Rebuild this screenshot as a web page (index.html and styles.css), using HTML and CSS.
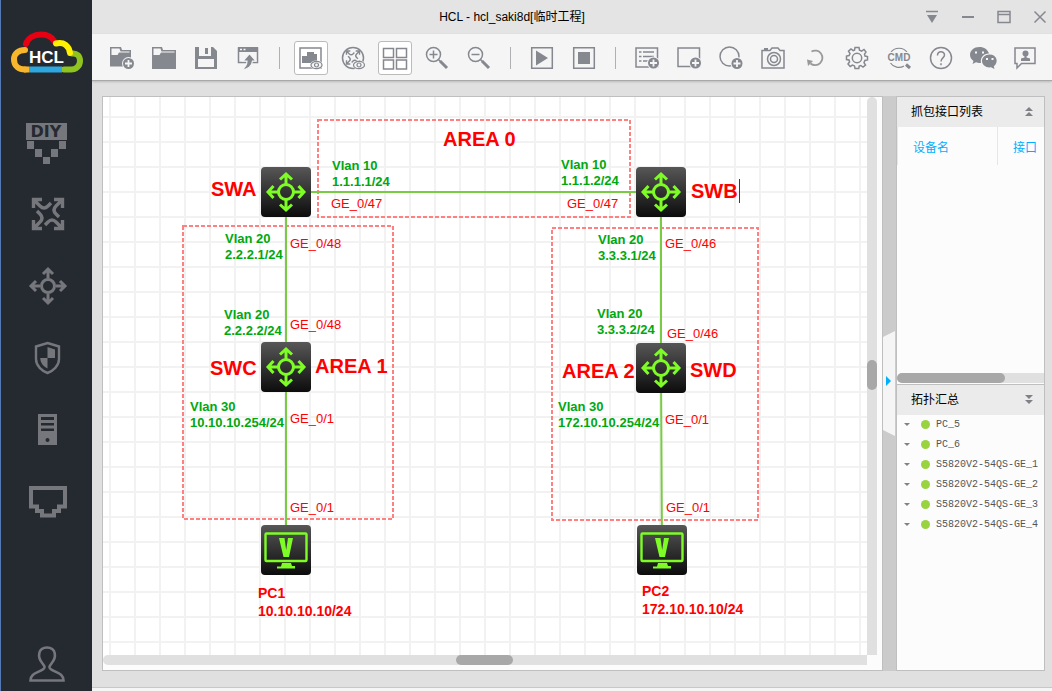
FILE: index.html
```html
<!DOCTYPE html>
<html lang="zh-CN">
<head>
<meta charset="utf-8">
<title>HCL</title>
<link rel="stylesheet" href="styles.css">
</head>
<body>
<svg class="defs" aria-hidden="true">
  <defs>
    <linearGradient id="tile" x1="0" y1="0" x2="0" y2="1">
      <stop offset="0" stop-color="#575757"/><stop offset="1" stop-color="#0c0c0c"/>
    </linearGradient>
    <g id="arrow"><path d="M0 -8V-16M-5 -12L0 -17L5 -12"/></g>
    <g id="bend"><path d="M-14.500 -6V-14.500H-6M-13 -13L-8 -8Q-4 -4 0 -8L3 -11"/></g>
    <g id="bends"><use href="#bend"/><use href="#bend" transform="rotate(90)"/><use href="#bend" transform="rotate(180)"/><use href="#bend" transform="rotate(270)"/></g>
    <g id="arrows"><circle r="6.500"/><use href="#arrow"/><use href="#arrow" transform="rotate(90)"/><use href="#arrow" transform="rotate(180)"/><use href="#arrow" transform="rotate(270)"/></g>
    <g id="plus"><circle r="6.500" class="paper"/><circle r="5.500" class="solid"/><path d="M-3.500 0H3.500M0 -3.500V3.500" stroke="#f5f5f5" stroke-width="1.800"/></g>
    <g id="eye"><ellipse rx="6.500" ry="4.500" class="paper"/><ellipse rx="5.500" ry="3.700" stroke-width="1.200"/><circle r="2" stroke-width="1.200"/></g>
    <symbol id="switch" viewBox="0 0 50 50">
      <rect width="50" height="50" rx="4" fill="url(#tile)"/>
      <g transform="translate(25 25)" fill="none" stroke="#7dfc26" stroke-width="3">
        <circle r="7.500"/>
        <g id="long"><path d="M0 -8V-18M-6 -12.500L0 -18L6 -12.500"/></g>
        <use href="#long" transform="rotate(90)"/><use href="#long" transform="rotate(180)"/><use href="#long" transform="rotate(270)"/>
      </g>
    </symbol>
    <symbol id="pc" viewBox="0 0 50 50">
      <rect width="50" height="50" rx="4" fill="url(#tile)"/>
      <rect x="4.500" y="8.500" width="41" height="27.500" rx="1" fill="none" stroke="#7dfc26" stroke-width="2.400"/>
      <path d="M18 13H23.500L25.200 25L27 13H32L28 32H22.500Z" fill="#7dfc26"/>
      <path d="M21 38H30L31 41H34V43.500H16V41.500H20Z" fill="#7dfc26"/>
    </symbol>
  </defs>
</svg>

<aside class="sidebar">
  <div class="logo">
    <svg width="72" height="42" viewBox="0 0 72 42" role="img" aria-label="HCL">
      <g fill="none" stroke-width="6" stroke-linecap="round">
        <path stroke="#e60012" d="M15 13C17 7 23 3.500 30 3.500C36 3.500 41 6 43.500 10.500"/>
        <path stroke="#8fc31f" d="M61 22.500C66 22 69 25 69 30C69 35 65 38.500 60 38.500H53"/>
        <path stroke="#2ea7e0" stroke-linecap="butt" d="M18 38.500H51"/>
        <path stroke="#f8b62d" stroke-linecap="butt" d="M13 38.500H18"/>
        <path stroke="#f8b62d" d="M14 19C8 19 3 22 3 28.500C3 35 8 38.500 14 38.500"/>
        <path stroke="#fff100" d="M45 12.500C53 10.500 58 15 59 22"/>
      </g>
      <text x="18" y="32" class="logo-text">HCL</text>
    </svg>
  </div>
  <nav class="nav">
    <button class="nav-btn" aria-label="DIY"><svg width="44" height="44" class="side-icon"><path class="fill" d="M1 1H42V18H1ZM2 19H9V27H2ZM34 19H41V27H34ZM10 27H17V35H10ZM26 27H33V35H26ZM18 35H25V42H18Z"/><text x="21" y="15" class="diy">DIY</text></svg></button>
    <button class="nav-btn" aria-label="路由器"><svg width="44" height="44" class="side-icon"><use href="#bends" transform="translate(23 20)" stroke-width="3.400"/></svg></button>
    <button class="nav-btn" aria-label="交换机"><svg width="44" height="44" class="side-icon"><use href="#arrows" transform="translate(23 20)" stroke-width="3"/></svg></button>
    <button class="nav-btn" aria-label="防火墙"><svg width="44" height="44" class="side-icon"><path stroke-width="2.400" d="M22.500 5L34 8.500V21C34 28 28 33 22.500 35C17 33 11 28 11 21V8.500Z"/><path class="fill" d="M22.500 9L30 11.500V20H22.500V30.500C18 28 15.500 25 15.200 20H22.500Z"/></svg></button>
    <button class="nav-btn" aria-label="终端"><svg width="44" height="44" class="side-icon"><path class="fill" d="M13 4H32V35H13Z"/><path class="hole" d="M16 7H29V10H16ZM16 13H29V15.500H16ZM16 18.500H29V21H16Z"/><circle class="hole" cx="22.500" cy="30" r="2"/></svg></button>
    <button class="nav-btn" aria-label="连线"><svg width="44" height="44" class="side-icon"><path stroke-width="4" d="M6 6H40V24.500H34V29H29V33.500H17V29H12V24.500H6Z"/></svg></button>
  </nav>
  <button class="nav-btn user" aria-label="用户"><svg width="44" height="44" class="side-icon"><path stroke-width="2.600" d="M5.500 38.500H38.500C38.500 31 31 31 25.500 27C23.500 25.500 24.500 24 26.500 21.500C32 15 31 5.500 22 5.500S12 15 17.500 21.500C19.500 24 20.500 25.500 18.500 27C13 31 5.500 31 5.500 38.500Z"/></svg></button>
</aside>

<div class="main">
  <header class="titlebar">
    <h1 class="title">HCL - hcl_saki8d[临时工程]</h1>
    <div class="window-controls">
      <button aria-label="菜单"><svg width="14" height="14"><path d="M1 1.500H13" /><path class="solid" d="M2 5H12L7 13Z"/></svg></button>
      <button aria-label="最小化"><svg width="14" height="14"><path d="M1 7H13" stroke-width="2"/></svg></button>
      <button aria-label="最大化"><svg width="14" height="14"><path d="M1 1.500H13V12.500H1ZM1 4.500H13"/></svg></button>
      <button aria-label="关闭"><svg width="14" height="14"><path d="M1.500 1.500L12.500 12.500M12.500 1.500L1.500 12.500"/></svg></button>
    </div>
  </header>

  <div class="toolbar">
    <button aria-label="新建工程"><svg><path class="solid" d="M0 1H11L12 4H21V20.500H0Z"/><path class="paper" d="M1.500 2.500H9.500L10.500 5.500H19.500V6.500H9L7.500 9H1.500Z"/><use href="#plus" transform="translate(18.500 17.500)"/></svg></button>
    <button aria-label="打开工程"><svg><path class="solid" d="M0 1H10L11 4H24V23H0Z"/><path class="paper" d="M1.500 2.500H8.500L9.500 5.500H22.500V6.500H9L7.500 9H1.500Z"/></svg></button>
    <button aria-label="保存"><svg><path class="solid" d="M1 1H5V10H17V1H19L23 5V23H1Z"/><path class="solid" d="M11 2H14V8H11Z"/><path class="paper" d="M4 13H20V21H4Z"/></svg></button>
    <button aria-label="导出"><svg><path d="M2.500 2H21.500V16.500H2.500Z"/><path class="solid" d="M2 1H22V6H2Z"/><path stroke="#f5f5f5" d="M4 3.500H6M7.500 3.500H9.500"/><path fill="#868890" stroke="#f5f5f5" stroke-width="1.200" d="M13.500 7.500L20 15H16.500C16 20 12 23.500 6 23.500C9.500 21 11 18.500 11 15H7Z"/></svg></button>
    <span class="sep"></span>
    <button class="on" aria-label="显示接口" aria-pressed="true"><svg><path d="M1 2H22V22H1Z"/><path class="solid" d="M8 6H15V8H18V17H3V10H8Z"/><use href="#eye" transform="translate(17.500 19)"/></svg></button>
    <button aria-label="显示链路"><svg><circle cx="12" cy="12" r="10.500"/><use href="#bends" transform="translate(12 11.500) scale(.45)" stroke-width="3"/><use href="#eye" transform="translate(18 19)"/></svg></button>
    <button class="on" aria-label="网格" aria-pressed="true"><svg><path d="M.5 2.500H10.500V11.500H.5ZM13.500 2.500H23.500V11.500H13.500ZM.5 14H10.500V23H.5ZM13.500 14H23.500V23H13.500Z"/></svg></button>
    <button aria-label="放大"><svg><circle cx="8.500" cy="8.500" r="7"/><path d="M4.500 8.500H12.500M8.500 4.500V12.500"/><path stroke-width="3" d="M15 15L22 22"/><path d="M13 13L16 16"/></svg></button>
    <button aria-label="缩小"><svg><circle cx="8.500" cy="8.500" r="7"/><path d="M4.500 8.500H12.500"/><path stroke-width="3" d="M15 15L22 22"/><path d="M13 13L16 16"/></svg></button>
    <span class="sep"></span>
    <button aria-label="启动"><svg><path d="M1.700 1.700H22.300V22.300H1.700Z"/><path class="solid" d="M6 4.500L18 12L6 19.500Z"/></svg></button>
    <button aria-label="停止"><svg><path d="M1.700 1.700H22.300V22.300H1.700Z"/><path class="solid" d="M6 6H18V18H6Z"/></svg></button>
    <span class="sep"></span>
    <button aria-label="添加文本"><svg><path d="M1 2H22.500V21H1Z"/><path d="M4 6H6.500M8 6H19M4 10.500H6.500M8 10.500H19M4 15H6.500M8 15H14"/><use href="#plus" transform="translate(18.500 17)"/></svg></button>
    <button aria-label="添加矩形"><svg><path d="M1 2H22.500V20.500H1Z"/><use href="#plus" transform="translate(18.500 17)"/></svg></button>
    <button aria-label="添加圆形"><svg><circle cx="10.500" cy="10.500" r="9.500"/><use href="#plus" transform="translate(18 17.500)"/></svg></button>
    <button aria-label="截图"><svg><path d="M1 4.500H9L11 2H17L19 4.500H23V22H1Z"/><path class="solid" d="M3 2H7V5H3Z"/><circle cx="13" cy="13" r="6.500"/><circle cx="13" cy="13" r="3.500"/></svg></button>
    <button aria-label="刷新"><svg><path stroke="#999" stroke-width="1.800" d="M8.500 5.500A7.300 7.300 0 1 1 7.500 17.500"/><path fill="#999" stroke="none" d="M4 13.500L10 15L5 20Z"/></svg></button>
    <button aria-label="设置"><svg><path d="M10 1.500H14L14.500 4.200L16.700 5.100L19 3.500L21 6L19.500 8.200L20 10L22.500 10.500V14L19.900 14.500L19 16.700L20.500 19L18 21L15.800 19.500L14.200 20L13.800 22.500H10L9.500 19.900L7.500 19L5.200 20.500L3 18L4.600 15.800L4 14L1.500 13.600V10L4.100 9.500L5 7.500L3.500 5.200L6 3L8.200 4.600L9.500 4.200Z"/><circle cx="12" cy="12" r="4.700"/></svg></button>
    <button aria-label="命令行"><svg><path stroke-width="1.200" d="M3.500 7A10 10 0 0 1 20.500 7M3.500 17A10 10 0 0 0 17 20"/><path stroke-width="3" d="M19 18.500L23 22"/><text x="12" y="15" class="cmd">CMD</text></svg></button>
    <button aria-label="帮助"><svg><circle cx="12" cy="12" r="10.500"/><path d="M8.500 9.500C8.500 4.500 15.500 4.800 15.500 9C15.500 12 12 11.800 12 15.500M12 17.200V19.200"/></svg></button>
    <button aria-label="微信"><svg class="wide"><path class="solid" d="M9.500 1C4 1 0 4.500 0 9C0 11.500 1.500 13.500 3.500 15L2.500 18L6 16.300C8 17 10 17 11 16.700C10 11.500 14 7.300 19 7.500C18 3.700 14 1 9.500 1Z"/><path class="solid" d="M19.500 8.500C15 8.500 12 11.500 12 15C12 19 16 22 21 21.300L24.500 23L23.800 20.200C29 16.500 27 8.500 19.500 8.500Z"/><path class="paper" d="M5 5.500H7V7.500H5ZM12 5.500H14V7.500H12ZM16 12H18V14H16ZM21.500 12H23.500V14H21.500Z"/></svg></button>
    <button aria-label="反馈"><svg><path d="M2 2H22V17.500H8.500L4 22V17.500H2Z"/><circle class="solid" cx="12.500" cy="7.500" r="3"/><path class="solid" d="M11.500 9H13.500V11.500L17 12.500V15H8V12.500L11.500 11.500Z"/></svg></button>
  </div>

  <div class="workspace">
    <main class="editor">
      <div class="canvas">
        <svg class="wires" aria-hidden="true">
          <g fill="none" stroke="#ff8080" stroke-width="2" stroke-dasharray="4 2">
            <rect x="215" y="23" width="312" height="97"/>
            <rect x="80" y="129" width="210" height="293"/>
            <rect x="449" y="131" width="206" height="292"/>
          </g>
          <path fill="none" stroke="#78cb42" stroke-width="2" d="M183 95H558M183 95V454M558 95V271L559 454"/>
        </svg>
        <svg class="node swa" role="img" aria-label="SWA"><use href="#switch"/></svg>
        <svg class="node swb" role="img" aria-label="SWB"><use href="#switch"/></svg>
        <svg class="node swc" role="img" aria-label="SWC"><use href="#switch"/></svg>
        <svg class="node swd" role="img" aria-label="SWD"><use href="#switch"/></svg>
        <svg class="node pc1" role="img" aria-label="PC1"><use href="#pc"/></svg>
        <svg class="node pc2" role="img" aria-label="PC2"><use href="#pc"/></svg>

        <div class="name area0">AREA 0</div>
        <div class="name area1">AREA 1</div>
        <div class="name area2">AREA 2</div>
        <div class="name name-swa">SWA</div>
        <div class="name name-swb editing">SWB</div>
        <div class="name name-swc">SWC</div>
        <div class="name name-swd">SWD</div>

        <div class="vlan vlan10-a">Vlan 10<br>1.1.1.1/24</div>
        <div class="vlan vlan10-b">Vlan 10<br>1.1.1.2/24</div>
        <div class="vlan vlan20-a">Vlan 20<br>2.2.2.1/24</div>
        <div class="vlan vlan20-c">Vlan 20<br>2.2.2.2/24</div>
        <div class="vlan vlan30-c">Vlan 30<br>10.10.10.254/24</div>
        <div class="vlan vlan20-b">Vlan 20<br>3.3.3.1/24</div>
        <div class="vlan vlan20-d">Vlan 20<br>3.3.3.2/24</div>
        <div class="vlan vlan30-d">Vlan 30<br>172.10.10.254/24</div>

        <div class="port port-a47">GE_0/47</div>
        <div class="port port-b47">GE_0/47</div>
        <div class="port port-a48">GE_0/48</div>
        <div class="port port-c48">GE_0/48</div>
        <div class="port port-c1">GE_0/1</div>
        <div class="port port-pc1">GE_0/1</div>
        <div class="port port-b46">GE_0/46</div>
        <div class="port port-d46">GE_0/46</div>
        <div class="port port-d1">GE_0/1</div>
        <div class="port port-pc2">GE_0/1</div>

        <div class="host host1">PC1<br>10.10.10.10/24</div>
        <div class="host host2">PC2<br>172.10.10.10/24</div>
      </div>
      <div class="scroll scroll-y"><div class="thumb"></div></div>
      <div class="scroll scroll-x"><div class="thumb"></div></div>
    </main>

    <div class="splitter">
      <button class="handle" aria-label="收起面板"><svg width="13" height="105"><path fill="#f5f5f5" d="M0 6L12 0V105L0 99Z"/><path fill="#00b0ff" d="M3 45L8 50L3 55Z"/></svg></button>
    </div>

    <aside class="panels">
      <section class="panel capture">
        <header class="panel-head"><h2>抓包接口列表</h2><button aria-label="折叠"><svg width="8" height="10"><path d="M0 4L4 0L8 4ZM0 9L4 5L8 9Z"/></svg></button></header>
        <table class="ports">
          <thead><tr><th>设备名</th><th>接口</th></tr></thead>
        </table>
        <div class="scroll panel-scroll"><div class="thumb"></div></div>
      </section>
      <section class="panel summary">
        <header class="panel-head"><h2>拓扑汇总</h2><button aria-label="展开"><svg width="8" height="10"><path d="M0 0H8L4 4ZM0 5H8L4 9Z"/></svg></button></header>
        <ul class="tree">
          <li><button aria-label="展开"></button><i></i>PC_5</li>
          <li><button aria-label="展开"></button><i></i>PC_6</li>
          <li><button aria-label="展开"></button><i></i>S5820V2-54QS-GE_1</li>
          <li><button aria-label="展开"></button><i></i>S5820V2-54QS-GE_2</li>
          <li><button aria-label="展开"></button><i></i>S5820V2-54QS-GE_3</li>
          <li><button aria-label="展开"></button><i></i>S5820V2-54QS-GE_4</li>
        </ul>
      </section>
    </aside>
  </div>
  <footer class="statusbar"></footer>
</div>
</body>
</html>
```
FILE: styles.css
```css
* { box-sizing: border-box; }
body {
  margin: 0;
  height: 100vh;
  display: flex;
  overflow: hidden;
  background: #e0e0e0;
  font: 12px/16px "Liberation Sans", "Noto Sans CJK SC", sans-serif;
  color: #000;
}
button {
  display: grid;
  place-items: center;
  margin: 0;
  padding: 0;
  border: 0;
  background: none;
}
svg { display: block; }
h1, h2, ul { margin: 0; padding: 0; font: inherit; }
.defs { position: absolute; width: 0; height: 0; }

/* sidebar */
.sidebar {
  flex: none;
  z-index: 1;
  width: 92px;
  display: flex;
  flex-direction: column;
  background: #252a30;
  border-left: 1px solid #5579b5;
}
.logo { height: 108px; padding: 31px 0 0 10px; }
.logo-text { font: bold 17px "Liberation Sans", sans-serif; fill: #fff; }
.nav { flex: 1; display: flex; flex-direction: column; }
.nav-btn { height: 72px; width: 100%; }
.user { height: 54px; }
.side-icon { fill: none; stroke: #76777c; }
.side-icon .fill { fill: #76777c; stroke: none; }
.side-icon .hole { fill: #252a30; stroke: none; }
.diy {
  font: bold 16px "DejaVu Sans", sans-serif;
  fill: #252a30;
  stroke: none;
  text-anchor: middle;
}

/* title bar */
.main { flex: 1; min-width: 0; display: flex; flex-direction: column; }
.titlebar { display: flex; align-items: center; height: 34px; background: #e4e4e4; }
.title { flex: 1; padding-left: 12px; text-align: center; }
.window-controls { display: flex; gap: 12px; }
.window-controls button { width: 24px; height: 34px; }
.window-controls svg { fill: none; stroke: #868890; stroke-width: 1.5; }

/* toolbar */
.toolbar {
  display: flex;
  gap: 8px;
  height: 47px;
  padding: 7px 0 0 13px;
  background: #f5f5f5;
  border-bottom: 1px solid #a8a8a8;
  box-shadow: 0 1px 2px #bbb;
}
.toolbar button { flex: none; width: 34px; height: 34px; border-radius: 3px; }
.toolbar .on { background: #fff; border: 1px solid #bbb; }
.toolbar svg {
  width: 24px;
  height: 24px;
  overflow: visible;
  fill: none;
  stroke: #868890;
  stroke-width: 1.5;
}
.toolbar .wide { width: 27px; }
.solid { fill: #868890; stroke: none; }
.paper { fill: #f5f5f5; stroke: none; }
.sep { width: 13px; height: 22px; margin-top: 6px; }
.sep::after { content: ""; display: block; width: 1px; height: 100%; margin: 0 auto; background: #b0b0b4; }
.cmd {
  font: bold 10px "Liberation Sans", sans-serif;
  fill: #868890;
  stroke: #f5f5f5;
  stroke-width: 2;
  paint-order: stroke;
  text-anchor: middle;
}

/* workspace */
.workspace { flex: 1; min-height: 0; display: flex; padding: 15px 7px 16px 10px; }
.editor {
  flex: 1;
  min-width: 0;
  display: grid;
  grid-template: minmax(0, 1fr) 10px / minmax(0, 1fr) 10px;
  padding: 0 5px 5px 0;
  background: #fcfcfc;
  border: 1px solid #bfbfbf;
}
.canvas {
  position: relative;
  overflow: hidden;
  background-color: #fff;
  background-image:
    linear-gradient(90deg, #f2f2f2 2px, transparent 2px),
    linear-gradient(#f2f2f2 2px, transparent 2px);
  background-size: 25px 25px;
  background-position: 6px 19px;
}
.scroll { display: flex; background: #e0e0e0; border-radius: 5px; }
.thumb { background: #a8a8a8; border-radius: 5px; }
.scroll-y { flex-direction: column; border-radius: 5px 5px 0 0; }
.scroll-y .thumb { height: 30px; margin-top: 263px; }
.scroll-x { border-radius: 5px 0 0 5px; }
.scroll-x .thumb { width: 57px; margin-left: 353px; }

/* diagram */
.wires { position: absolute; inset: 0; width: 100%; height: 100%; }
.node, .name, .vlan, .port, .host { position: absolute; white-space: nowrap; }
.node { width: 50px; height: 50px; }
.name { font-size: 20px; line-height: 24px; font-weight: bold; color: #f00; }
.vlan { font-size: 13px; line-height: 16px; font-weight: bold; color: #00a80f; }
.port { font-size: 13px; line-height: 16px; color: #f00; }
.host { font-size: 14px; line-height: 18px; font-weight: bold; color: #f00; }
.editing { padding-right: 1px; border-right: 1px solid #c00; }

.swa { left: 158px; top: 70px; }
.swb { left: 533px; top: 70px; }
.swc { left: 158px; top: 245px; }
.swd { left: 533px; top: 246px; }
.pc1 { left: 158px; top: 428px; }
.pc2 { left: 534px; top: 428px; }
.area0 { left: 340px; top: 30px; }
.area1 { left: 212px; top: 257px; }
.area2 { left: 459px; top: 262px; }
.name-swa { left: 108px; top: 80px; }
.name-swb { left: 588px; top: 82px; }
.name-swc { left: 107px; top: 259px; }
.name-swd { left: 587px; top: 261px; }
.vlan10-a { left: 229px; top: 61px; }
.vlan10-b { left: 458px; top: 60px; }
.vlan20-a { left: 122px; top: 134px; }
.vlan20-c { left: 121px; top: 210px; }
.vlan30-c { left: 87px; top: 302px; }
.vlan20-b { left: 495px; top: 135px; }
.vlan20-d { left: 494px; top: 209px; }
.vlan30-d { left: 455px; top: 302px; }
.port-a47 { left: 228px; top: 99px; }
.port-b47 { left: 464px; top: 99px; }
.port-a48 { left: 187px; top: 139px; }
.port-c48 { left: 187px; top: 220px; }
.port-c1 { left: 187px; top: 314px; }
.port-pc1 { left: 187px; top: 403px; }
.port-b46 { left: 562px; top: 139px; }
.port-d46 { left: 564px; top: 229px; }
.port-d1 { left: 562px; top: 315px; }
.port-pc2 { left: 563px; top: 403px; }
.host1 { left: 155px; top: 487px; }
.host2 { left: 539px; top: 485px; }

/* right panels */
.splitter { flex: none; width: 13px; display: flex; align-items: center; background: #cbcbcb; }
.panels {
  flex: none;
  width: 149px;
  display: flex;
  flex-direction: column;
  background: #fcfcfc;
  border: 1px solid #bfbfbf;
}
.panel { display: flex; flex-direction: column; min-height: 0; flex: 1 1 0; overflow: hidden; }
.capture { flex-basis: 2px; border-bottom: 1px solid #bfbfbf; }
.panel-head {
  flex: none;
  display: flex;
  align-items: center;
  justify-content: space-between;
  height: 30px;
  padding: 0 11px 0 14px;
  background: #ebebeb;
}
.panel-head svg { fill: #808186; }
.ports { width: 100%; table-layout: fixed; border-collapse: collapse; }
.ports th {
  height: 38px;
  padding: 4px 0 0 15px;
  text-align: left;
  font-weight: normal;
  color: #00b0ff;
  border-left: 1px solid #e6e6e6;
  white-space: nowrap;
}
.ports th:first-child { width: 100px; }
.panel-scroll { flex: none; height: 10px; margin: auto 0 1px; border-radius: 5px 0 0 5px; }
.panel-scroll .thumb { width: 108px; }
.tree { list-style: none; padding-left: 7px; color: #555; }
.tree li {
  display: flex;
  align-items: center;
  height: 20px;
  font: 10px/22px "Liberation Mono", monospace;
  white-space: nowrap;
}
.tree button { width: 0; height: 0; border: 3px solid transparent; border-top-color: #808186; border-bottom: 0; }
.tree i { width: 9px; height: 9px; margin: 0 6px 0 11px; border-radius: 50%; background: #99d340; }
.statusbar { flex: none; height: 4px; background: #f5f5f5; border-top: 1px solid #c8c8c8; }
```
